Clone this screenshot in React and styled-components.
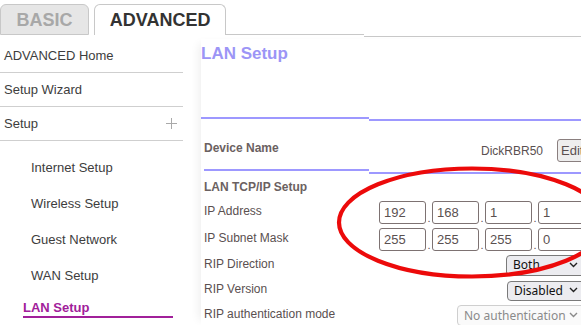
import { Fragment } from "react";
import styled, { createGlobalStyle } from "styled-components";

const GlobalStyle = createGlobalStyle`
  * { box-sizing: border-box; }
  body {
    margin: 0;
    background: #fff;
    font-family: "Liberation Sans", Arial, sans-serif;
  }
`;

const Page = styled.div`
  position: relative;
  width: 581px;
  height: 325px;
  overflow: hidden;
  background: #fff;
`;

const TabBar = styled.div`
  display: flex;
  align-items: flex-start;
  height: 39px;
  padding-top: 4px;
`;

const Tab = styled.div`
  height: 31px;
  width: ${(p) => p.w}px;
  margin-left: ${(p) => p.gap || 0}px;
  display: flex;
  align-items: center;
  justify-content: center;
  padding-top: 1px;
  font-size: 18px;
  font-weight: 700;
  border: 1px solid #c8c8c8;
  border-bottom: ${(p) => (p.active ? "none" : "1px solid #c8c8c8")};
  border-radius: 6px 6px 0 0;
  background: ${(p) => (p.active ? "#fff" : "#e6e6e6")};
  color: ${(p) => (p.active ? "#333" : "#a8a8a8")};
`;

const TabFill = styled.div`
  width: ${(p) => p.w}px;
  height: ${(p) => p.h}px;
  border-bottom: 1px solid #c8c8c8;
`;

const Body = styled.div`
  display: flex;
  align-items: flex-start;
`;

const Sidebar = styled.nav`
  flex: 0 0 183px;
  font-size: 13px;
  color: #3d3d3d;
`;

const NavItem = styled.div`
  height: 34px;
  display: flex;
  align-items: center;
  justify-content: space-between;
  padding: 0 6px 1px 4px;
  border-bottom: 1px solid #cfcfcf;
`;

const SubList = styled.div`
  padding-top: 8px;
`;

const SubItem = styled.div`
  height: 36px;
  display: flex;
  align-items: center;
  padding-left: 31px;
`;

const ActiveItem = styled.div`
  margin: 7px 0 0 23px;
  width: 150px;
  line-height: 16px;
  font-weight: 700;
  color: #a1209a;
  border-bottom: 2px solid #a1209a;
`;

const Main = styled.main`
  flex: 0 0 390px;
  margin-left: 18px;
  height: 286px;
  background: #fff;
  box-shadow: -7px 0 9px -5px rgba(0, 0, 0, 0.07);
`;

const Row = styled.div`
  display: grid;
  grid-template-columns: ${(p) => p.lead}px 1fr;
  margin-left: ${(p) => p.indent || 0}px;
  align-items: start;
`;

const Cell = styled.div`
  height: ${(p) => p.h}px;
  padding-top: ${(p) => p.pt || 0}px;
  border-bottom: 2px solid #9d98ff;
  display: flex;
  align-items: ${(p) => (p.top ? "flex-start" : "center")};
  justify-content: ${(p) => (p.right ? "flex-end" : "flex-start")};
  gap: 14px;
`;

const Title = styled.h1`
  margin: 5px 0 0;
  font-size: 17px;
  line-height: 20px;
  font-weight: 700;
  color: #9c95f6;
`;

const StrongLabel = styled.div`
  font-size: 12px;
  font-weight: 700;
  color: #6b6161;
`;

const Value = styled.span`
  font-size: 12px;
  color: #5a5050;
`;

const EditButton = styled.div`
  width: 34px;
  height: 23px;
  display: flex;
  align-items: center;
  padding-left: 3px;
  font-size: 13px;
  color: #5a5050;
  background: #eeeeee;
  border: 1px solid #8a7f7f;
  border-radius: 3px;
`;

const Section = styled.div`
  margin: 5px 0 0 3px;
  line-height: 16px;
  height: 20px;
`;

const Field = styled.div`
  display: grid;
  grid-template-columns: 165px 1fr;
  align-items: center;
  height: ${(p) => p.h}px;
  margin-left: 3px;
`;

const Label = styled.div`
  font-size: 12px;
  color: #5a5050;
  padding-bottom: 3px;
`;

const Controls = styled.div`
  display: flex;
  justify-content: flex-end;
  align-items: center;
  padding-right: ${(p) => p.pr}px;
`;

const IpBox = styled.div`
  width: 47px;
  height: 23px;
  display: flex;
  align-items: center;
  padding-left: 4px;
  font-size: 13px;
  color: #5a5050;
  border: 1px solid #7d7272;
  border-radius: 3px;
`;

const Dot = styled.span`
  width: 6px;
  align-self: flex-end;
  text-align: center;
  font-size: 11px;
  line-height: 12px;
  color: #5a5050;
`;

const Select = styled.div`
  width: ${(p) => p.w}px;
  height: ${(p) => p.h}px;
  display: flex;
  align-items: center;
  justify-content: space-between;
  padding: 0 7px 1px 6px;
  font-family: "Noto Sans", "Liberation Sans", sans-serif;
  font-size: 12px;
  color: ${(p) => (p.muted ? "#8a8a8a" : "#111")};
  background: ${(p) => (p.muted ? "#fafafa" : "#ececf0")};
  border: 1px solid ${(p) => (p.muted ? "#cfcfcf" : "#7a7a7a")};
  border-radius: 4px;
`;

const Plus = () => (
  <svg width="11" height="11" viewBox="0 0 11 11">
    <path d="M5.5 0v11M0 5.5h11" stroke="#a9a9a9" strokeWidth="1" />
  </svg>
);

const Chevron = ({ muted }) => (
  <svg width="9" height="6" viewBox="0 0 9 6">
    <path
      d="M1 1l3.5 3.5L8 1"
      fill="none"
      stroke={muted ? "#8a8a8a" : "#222"}
      strokeWidth="1.4"
    />
  </svg>
);

const Annotation = styled.svg`
  position: absolute;
  left: 0;
  top: 0;
  pointer-events: none;
`;

const IpField = ({ parts }) => (
  <Controls pr={6}>
    {parts.map((p, i) => (
      <Fragment key={i}>
        {i > 0 && <Dot>.</Dot>}
        <IpBox>{p}</IpBox>
      </Fragment>
    ))}
  </Controls>
);

const subItems = ["Internet Setup", "Wireless Setup", "Guest Network", "WAN Setup"];

export default function App() {
  return (
    <Page>
      <GlobalStyle />
      <TabBar>
        <Tab w={90}>BASIC</Tab>
        <Tab w={134} gap={5} active>
          ADVANCED
        </Tab>
        <TabFill w={139} h={31} />
        <TabFill w={220} h={33} />
      </TabBar>
      <Body>
        <Sidebar>
          <NavItem>ADVANCED Home</NavItem>
          <NavItem>Setup Wizard</NavItem>
          <NavItem>
            Setup
            <Plus />
          </NavItem>
          <SubList>
            {subItems.map((s) => (
              <SubItem key={s}>{s}</SubItem>
            ))}
            <ActiveItem>LAN Setup</ActiveItem>
          </SubList>
        </Sidebar>
        <Main>
          <Row lead={168}>
            <Cell h={80} top>
              <Title>LAN Setup</Title>
            </Cell>
            <Cell h={82} />
          </Row>
          <Row lead={165} indent={3}>
            <Cell h={50} pt={6}>
              <StrongLabel>Device Name</StrongLabel>
            </Cell>
            <Cell h={53} pt={8} right>
              <Value>DickRBR50</Value>
              <EditButton>Edit</EditButton>
            </Cell>
          </Row>
          <Section>
            <StrongLabel>LAN TCP/IP Setup</StrongLabel>
          </Section>
          <Field h={27}>
            <Label>IP Address</Label>
            <IpField parts={["192", "168", "1", "1"]} />
          </Field>
          <Field h={26}>
            <Label>IP Subnet Mask</Label>
            <IpField parts={["255", "255", "255", "0"]} />
          </Field>
          <Field h={26}>
            <Label>RIP Direction</Label>
            <Controls pr={5}>
              <Select w={80} h={21}>
                Both
                <Chevron />
              </Select>
            </Controls>
          </Field>
          <Field h={25}>
            <Label>RIP Version</Label>
            <Controls pr={5}>
              <Select w={79} h={20}>
                Disabled
                <Chevron />
              </Select>
            </Controls>
          </Field>
          <Field h={25}>
            <Label>RIP authentication mode</Label>
            <Controls pr={5}>
              <Select w={129} h={21} muted>
                No authentication
                <Chevron muted />
              </Select>
            </Controls>
          </Field>
        </Main>
      </Body>
      <Annotation width="587" height="325">
        <ellipse
          cx="472"
          cy="222.5"
          rx="133"
          ry="54"
          fill="none"
          stroke="#ec0a0a"
          strokeWidth="4.2"
        />
      </Annotation>
    </Page>
  );
}
